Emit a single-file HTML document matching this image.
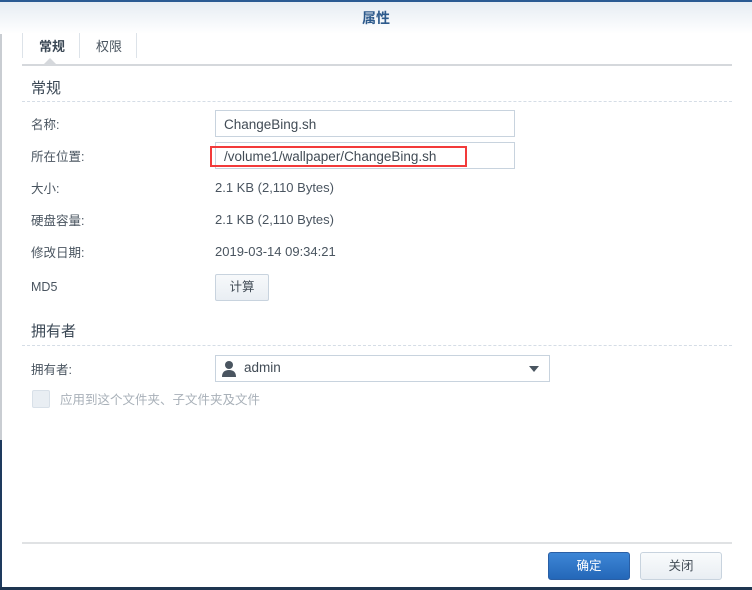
<!DOCTYPE html>
<html><head><meta charset="utf-8"><style>
*{margin:0;padding:0;box-sizing:border-box}
body{width:752px;height:590px;overflow:hidden;background:#fff;font-family:"Liberation Sans","Noto Sans CJK SC",sans-serif;font-size:13px;color:#414b55;position:relative}
.a{position:absolute}
.title{left:0;top:0;width:752px;height:34px;border-top:2px solid #2a5a93;background:linear-gradient(#e6ecf3,#fff);text-align:center;line-height:32px;font-weight:bold;color:#2d5a8c;font-size:14px}
.lbl{left:31px;font-size:12.5px;color:#4a5560}
.val{left:215px;font-size:13px;color:#4a5560}
.inp{left:215px;width:300px;height:27px;border:1px solid #c8d3de;padding-left:8px;line-height:27px;font-size:13.5px;color:#414b55}
.dash{left:22px;width:710px;border-top:1px dashed #d5dde6}
</style></head><body>
<div class="a" style="left:0;top:0;width:2px;height:440px;background:#c9cdd2"></div>
<div class="a" style="left:0;top:440px;width:2px;height:150px;background:#1e3a5e"></div>
<div class="a" style="left:0;top:587px;width:752px;height:3px;background:#1e3550"></div>
<div class="a title">属性</div>
<div class="a" style="left:22px;top:33px;width:1px;height:25px;background:#dde3e9"></div>
<div class="a" style="left:79px;top:33px;width:1px;height:25px;background:#dde3e9"></div>
<div class="a" style="left:136px;top:33px;width:1px;height:25px;background:#dde3e9"></div>
<div class="a" style="left:39px;top:36px;font-weight:bold;color:#3a4754">常规</div>
<div class="a" style="left:96px;top:36px;color:#4a5560">权限</div>
<div class="a" style="left:22px;top:64px;width:710px;height:2px;background:#d5d8dc"></div>
<div class="a" style="left:44px;top:58px;width:0;height:0;border-left:6px solid transparent;border-right:6px solid transparent;border-bottom:6px solid #d5d8dc"></div>
<div class="a" style="left:31px;top:77px;font-size:15px;color:#3a4754">常规</div>
<div class="a dash" style="top:101px"></div>
<div class="a lbl" style="top:114px">名称:</div>
<div class="a inp" style="top:110px">ChangeBing.sh</div>
<div class="a lbl" style="top:146px">所在位置:</div>
<div class="a inp" style="top:142px">/volume1/wallpaper/ChangeBing.sh</div>
<div class="a" style="left:210px;top:146px;width:257px;height:21px;border:2px solid #f23a3a"></div>
<div class="a lbl" style="top:178px">大小:</div><div class="a val" style="top:180px">2.1 KB (2,110 Bytes)</div>
<div class="a lbl" style="top:210px">硬盘容量:</div><div class="a val" style="top:212px">2.1 KB (2,110 Bytes)</div>
<div class="a lbl" style="top:242px">修改日期:</div><div class="a val" style="top:244px">2019-03-14 09:34:21</div>
<div class="a lbl" style="top:280px">MD5</div>
<div class="a" style="left:215px;top:274px;width:54px;height:27px;border:1px solid #c8d3de;border-radius:2px;background:linear-gradient(#f7f9fb,#e9eef3);text-align:center;line-height:25px;font-size:12.5px">计算</div>
<div class="a" style="left:31px;top:320px;font-size:15px;color:#3a4754">拥有者</div>
<div class="a dash" style="top:345px"></div>
<div class="a lbl" style="top:359px">拥有者:</div>
<div class="a" style="left:215px;top:355px;width:335px;height:27px;border:1px solid #c8d3de"></div>
<svg class="a" style="left:221px;top:360px" width="16" height="17" viewBox="0 0 16 17"><circle cx="8" cy="5" r="4" fill="#4a5560"/><path d="M1 17 Q1 10 8 10 Q15 10 15 17Z" fill="#4a5560"/></svg>
<div class="a" style="left:244px;top:360px;font-size:13.5px;color:#414b55">admin</div>
<div class="a" style="left:529px;top:366px;border-left:5px solid transparent;border-right:5px solid transparent;border-top:6px solid #4a5560"></div>
<div class="a" style="left:32px;top:390px;width:18px;height:18px;border:1px solid #d8e0e8;background:#e9eef3;border-radius:2px"></div>
<div class="a" style="left:60px;top:389px;font-size:12.5px;color:#a8b0b8">应用到这个文件夹、子文件夹及文件</div>
<div class="a" style="left:22px;top:542px;width:710px;height:2px;background:#e0e2e4"></div>
<div class="a" style="left:548px;top:552px;width:82px;height:28px;border:1px solid #2a5fa5;border-radius:3px;background:linear-gradient(#3d86d6,#2467b8);color:#fff;text-align:center;line-height:26px;font-size:12.5px">确定</div>
<div class="a" style="left:640px;top:552px;width:82px;height:28px;border:1px solid #c8d3de;border-radius:3px;background:linear-gradient(#f9fbfc,#e9eef3);color:#414b55;text-align:center;line-height:26px;font-size:12.5px">关闭</div>
</body></html>
